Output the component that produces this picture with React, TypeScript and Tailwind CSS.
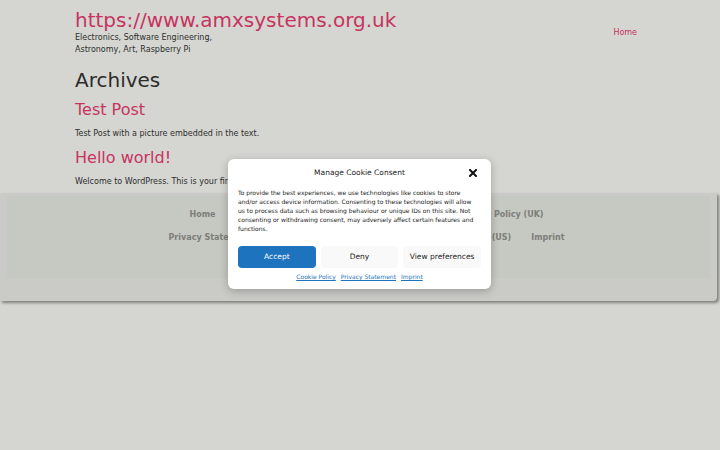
import React from 'react';

const footerRows = [
  ['Home', 'Cookie Policy (EU)', 'Cookie Policy (US)', 'Cookie Policy (UK)'],
  ['Privacy Statement (EU)', 'Opt-out preferences', 'Privacy Statement (US)', 'Imprint'],
];

function CookieModal() {
  return (
    <div className="absolute left-[228px] top-[159px] w-[263px] bg-white rounded-[6px] shadow-[0_2px_8px_rgba(0,0,0,0.25)] px-[10px] pt-[8px] pb-[8px]">
      <div className="relative text-center text-[7.5px] leading-[12px] text-[#222]">
        Manage Cookie Consent
        <svg className="absolute right-[4px] top-[2px]" width="8" height="8" viewBox="0 0 8 8">
          <path d="M1 1L7 7M7 1L1 7" stroke="#111" strokeWidth="2" strokeLinecap="square" />
        </svg>
      </div>
      <p className="mt-[9px] pr-[3px] text-[6px] leading-[9px] text-[#222]">
        To provide the best experiences, we use technologies like cookies to store and/or access device information. Consenting to these technologies will allow us to process data such as browsing behaviour or unique IDs on this site. Not consenting or withdrawing consent, may adversely affect certain features and functions.
      </p>
      <div className="mt-[13px] grid grid-cols-3 gap-[5px] text-[7.5px]">
        <button className="h-[22px] rounded-[4px] bg-[#1e73be] text-white">Accept</button>
        <button className="h-[22px] rounded-[4px] bg-[#f9f9f9] text-[#222]">Deny</button>
        <button className="h-[22px] rounded-[4px] bg-[#f9f9f9] text-[#222]">View preferences</button>
      </div>
      <div className="mt-[4px] flex justify-center gap-[5px] text-[6px] leading-[9px] text-[#1e73be] underline">
        <span>Cookie Policy</span>
        <span>Privacy Statement</span>
        <span>Imprint</span>
      </div>
    </div>
  );
}

export default function App() {
  return (
    <div className="relative h-[450px] overflow-hidden bg-[#d5d6d1] font-['DejaVu_Sans',sans-serif]">
      <header className="w-[570px] mx-auto flex justify-between pt-[8px]">
        <div>
          <div className="text-[20px] leading-[24px] text-[#c6345f]">https://www.amxsystems.org.uk</div>
          <div className="text-[8px] leading-[12px] text-[#2e2e2e]">
            Electronics, Software Engineering,
            <br />
            Astronomy, Art, Raspberry Pi
          </div>
        </div>
        <nav className="pt-[19px] pr-[8px] text-[8px] leading-[12px] text-[#c6345f]">Home</nav>
      </header>

      <main className="w-[570px] mx-auto">
        <h1 className="mt-[10px] text-[20px] leading-[28px] text-[#2c2c2c]">Archives</h1>
        <h2 className="mt-[5px] text-[16px] leading-[22px] text-[#c6345f]">Test Post</h2>
        <p className="mt-[7px] text-[8px] leading-[12px] text-[#2e2e2e]">Test Post with a picture embedded in the text.</p>
        <h2 className="mt-[7px] text-[16px] leading-[22px] text-[#c6345f]">Hello world!</h2>
        <p className="mt-[7px] text-[8px] leading-[12px] text-[#2e2e2e]">
          Welcome to WordPress. This is your first post. Edit or delete it, then start writing!
        </p>
      </main>

      <footer className="mt-[5px] w-[717px] h-[108px] bg-[#cacbc6] rounded-br-[4px] shadow-[2px_2px_3px_rgba(0,0,0,0.4)] pt-[3px] px-[7px]">
        <div className="h-[82px] bg-[#c6c8c2] pl-[16px] pt-[13px] flex flex-col items-center gap-[11px]">
          {footerRows.map((row, i) => (
            <div
              key={i}
              className={
                i === 0
                  ? 'flex gap-[27px] whitespace-nowrap text-[8px] leading-[12px] font-bold text-[#7d7e79]'
                  : 'flex gap-[20px] whitespace-nowrap text-[8px] leading-[12px] font-bold text-[#7d7e79]'
              }
            >
              {row.map((item) => (
                <span key={item}>{item}</span>
              ))}
            </div>
          ))}
        </div>
      </footer>

      <CookieModal />
    </div>
  );
}
